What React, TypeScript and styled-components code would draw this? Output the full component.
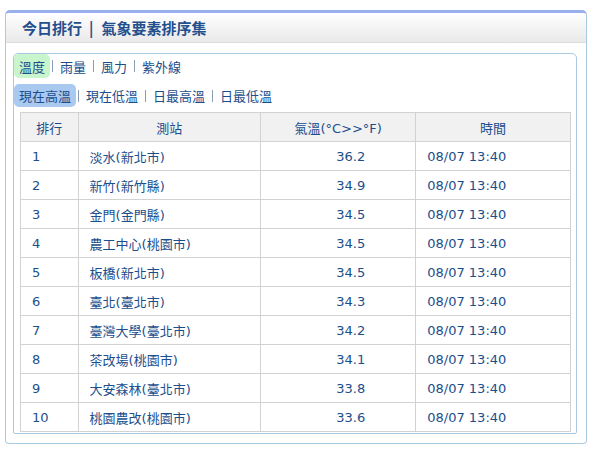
import React from "react";
import styled, { createGlobalStyle } from "styled-components";

const Global = createGlobalStyle`
  html, body { margin: 0; padding: 0; background: #fff; }
  body { font-family: "DejaVu Sans", "Noto Sans CJK TC", sans-serif; }
`;

const Panel = styled.div`
  margin: 10px 0 0 5px;
  width: 582px;
  box-sizing: border-box;
  border: 1px solid #a9cbe2;
  border-top: 3px solid #98b1ec;
  border-radius: 5px 5px 4px 4px;
  background: #fff;
  padding-bottom: 9px;
`;

const Header = styled.div`
  height: 29px;
  display: flex;
  align-items: center;
  padding-left: 16px;
  background: linear-gradient(#ffffff, #e9e9e9);
  border-bottom: 1px solid #dcdcdc;
  border-radius: 3px 3px 0 0;
`;

const Title = styled.h1`
  margin: 0;
  display: flex;
  align-items: center;
  font-family: "Noto Sans CJK TC", sans-serif;
  font-size: 15px;
  font-weight: 700;
  color: #234f8c;
`;

const Bar = styled.span`
  margin: 0 8px 0 7px;
`;

const Inner = styled.div`
  margin: 10px 9px 0 7px;
  border: 1px solid #a9cbe2;
  border-radius: 5px 5px 2px 2px;
  padding-bottom: 1px;
`;

const TabRow = styled.div<{ $mt: number; $h: number }>`
  display: flex;
  align-items: center;
  margin-top: ${(p) => p.$mt}px;
  height: ${(p) => p.$h}px;
`;

const Tab = styled.span<{ $active?: string }>`
  display: inline-flex;
  align-items: center;
  height: 100%;
  padding: 0 5px;
  border-radius: 5px;
  font-size: 13px;
  color: #1b4e8c;
  background: ${(p) => p.$active || "transparent"};
`;

const Sep = styled.span`
  width: 1px;
  height: 12px;
  margin: 0 2px;
  background: #8c9db5;
`;

const Table = styled.table`
  margin: 5px 5px 0 6px;
  width: 551px;
  border-collapse: collapse;
  border: 1px solid #cfcfcf;
  font-size: 13px;
  color: #1b4e8c;
`;

const Th = styled.th<{ $w: number }>`
  width: ${(p) => p.$w}px;
  height: 28px;
  padding: 0;
  background: #f1f1f1;
  border: 1px solid #d2d2d2;
  font-weight: 400;
  text-align: center;
`;

const Td = styled.td<{ $align?: string; $pr?: number }>`
  height: 28px;
  padding: 0 ${(p) => p.$pr ?? 12}px 0 ${(p) => (p.$align === "right" ? 0 : 11)}px;
  border: 1px solid #d2d2d2;
  text-align: ${(p) => p.$align || "left"};
  white-space: nowrap;
`;

const rows: [string, string][] = [
  ["淡水(新北市)", "36.2"],
  ["新竹(新竹縣)", "34.9"],
  ["金門(金門縣)", "34.5"],
  ["農工中心(桃園市)", "34.5"],
  ["板橋(新北市)", "34.5"],
  ["臺北(臺北市)", "34.3"],
  ["臺灣大學(臺北市)", "34.2"],
  ["茶改場(桃園市)", "34.1"],
  ["大安森林(臺北市)", "33.8"],
  ["桃園農改(桃園市)", "33.6"],
];

const tabs1 = ["溫度", "雨量", "風力", "紫外線"];
const tabs2 = ["現在高溫", "現在低溫", "日最高溫", "日最低溫"];

function Tabs({ items, color, mt, h }: { items: string[]; color: string; mt: number; h: number }) {
  return (
    <TabRow $mt={mt} $h={h}>
      {items.map((t, i) => (
        <React.Fragment key={t}>
          {i > 0 && <Sep />}
          <Tab $active={i === 0 ? color : undefined}>{t}</Tab>
        </React.Fragment>
      ))}
    </TabRow>
  );
}

export default function App() {
  return (
    <>
      <Global />
      <Panel>
        <Header>
          <Title>
            今日排行<Bar>|</Bar>氣象要素排序集
          </Title>
        </Header>
        <Inner>
          <Tabs items={tabs1} color="#c9f5cc" mt={0} h={24} />
          <Tabs items={tabs2} color="#a9c9f1" mt={6} h={23} />
          <Table>
            <thead>
              <tr>
                <Th $w={57}>排行</Th>
                <Th $w={183}>測站</Th>
                <Th $w={156}>氣溫(°C&gt;&gt;°F)</Th>
                <Th $w={155}>時間</Th>
              </tr>
            </thead>
            <tbody>
              {rows.map(([name, v], i) => (
                <tr key={name}>
                  <Td>{i + 1}</Td>
                  <Td>{name}</Td>
                  <Td $align="right" $pr={50}>{v}</Td>
                  <Td>08/07 13:40</Td>
                </tr>
              ))}
            </tbody>
          </Table>
        </Inner>
      </Panel>
    </>
  );
}
